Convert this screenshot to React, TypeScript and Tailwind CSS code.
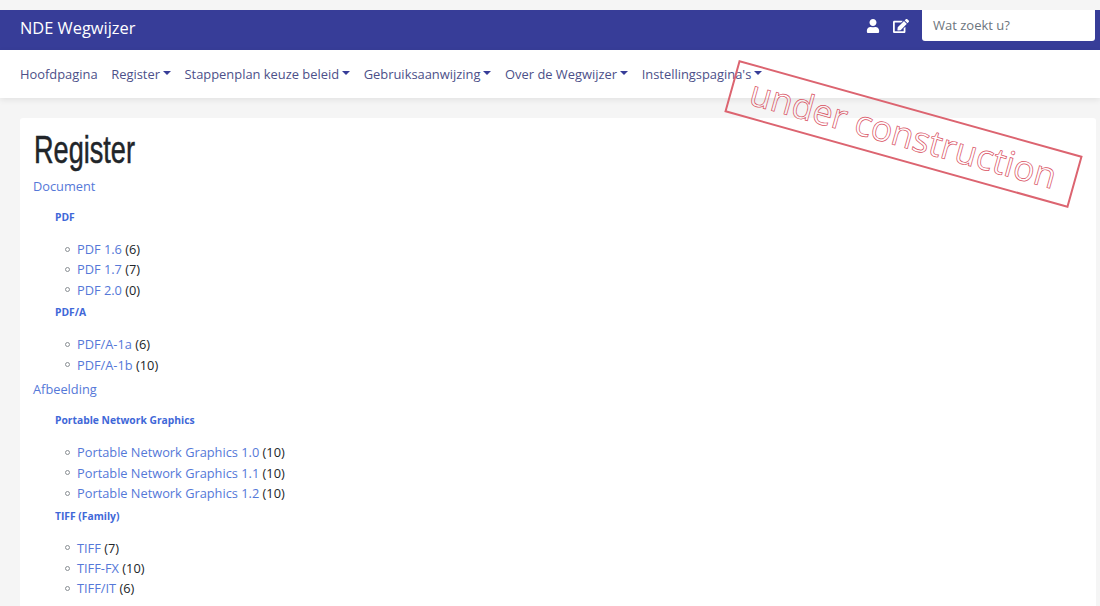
import React from "react";
import { FaUser, FaEdit } from "react-icons/fa";

const nav = [
  { label: "Hoofdpagina", caret: false },
  { label: "Register", caret: true },
  { label: "Stappenplan keuze beleid", caret: true },
  { label: "Gebruiksaanwijzing", caret: true },
  { label: "Over de Wegwijzer", caret: true },
  { label: "Instellingspagina's", caret: true },
];

const register = [
  {
    title: "Document",
    groups: [
      {
        title: "PDF",
        items: [["PDF 1.6", 6], ["PDF 1.7", 7], ["PDF 2.0", 0]],
      },
      {
        title: "PDF/A",
        items: [["PDF/A-1a", 6], ["PDF/A-1b", 10]],
      },
    ],
  },
  {
    title: "Afbeelding",
    groups: [
      {
        title: "Portable Network Graphics",
        items: [
          ["Portable Network Graphics 1.0", 10],
          ["Portable Network Graphics 1.1", 10],
          ["Portable Network Graphics 1.2", 10],
        ],
      },
      {
        title: "TIFF (Family)",
        items: [["TIFF", 7], ["TIFF-FX", 10], ["TIFF/IT", 6]],
      },
    ],
  },
];

const App = () => {
  return (
    <div className="h-[606px] overflow-hidden bg-[#f5f5f5] pt-[10px] font-['Open_Sans','Noto_Sans',sans-serif] text-[12.8px] text-[#212529] relative">
      {/* TOP BAR */}
      <header className="h-10 bg-[#373d98] flex pl-5 pr-[5px]">
        <span className="text-white text-[16.4px] leading-[36px]">NDE Wegwijzer</span>
        <div className="ml-auto flex text-white h-[31px] items-center">
          <FaUser className="text-[14px] mr-[13px]" />
          <FaEdit className="text-[16px] mr-[13px]" />
          <div className="w-[173px] h-[31px] bg-white rounded-b-[3px] pl-[11px] flex items-center text-[13px] text-[#6c757d]">
            Wat zoekt u?
          </div>
        </div>
      </header>

      {/* MENU */}
      <nav className="h-12 bg-white flex items-center pl-5 pt-[2px] gap-[13.6px] text-[12.9px] text-[#4c5089] shadow-[0_2px_6px_rgba(0,0,0,0.08)]">
        {nav.map((item) => (
          <span key={item.label} className="flex items-center whitespace-nowrap">
            {item.label}
            {item.caret && (
              <span className="ml-[3px] mb-[3px] border-x-[4.5px] border-t-[4.5px] border-x-transparent border-t-[#373d98]" />
            )}
          </span>
        ))}
      </nav>

      {/* CONTENT */}
      <main className="mt-5 ml-5 mr-1 h-[600px] bg-white rounded-[3px] pl-[13px] pt-[5px]">
        <h1 className="h-[53px] text-[39px] leading-[53px] text-[#212529] font-['Liberation_Sans',sans-serif]">
          <span className="inline-block ml-px origin-left scale-x-[0.695] [-webkit-text-stroke:0.5px_#212529]">Register</span>
        </h1>
        {register.map((section) => (
          <section key={section.title} className="mb-[4.4px]">
            <a className="block h-[20px] leading-[20px] text-[#5578d8]">{section.title}</a>
            <div className="pt-[9px]">
              {section.groups.map((group) => (
                <div key={group.title} className="pl-[22px]">
                  <h6 className="h-[34px] pt-[2px] leading-[20px] text-[10.3px] font-bold text-[#3f68d8]">
                    {group.title}
                  </h6>
                  <ul>
                    {group.items.map(([name, count]) => (
                      <li key={name} className="h-[20.4px] leading-[20.4px] flex items-center pl-[10px]">
                        <span className="w-[5px] h-[5px] mr-[7px] rounded-full border border-[#8a8f94]" />
                        <span>
                          <a className="text-[#5578d8]">{name}</a> ({count})
                        </span>
                      </li>
                    ))}
                  </ul>
                </div>
              ))}
            </div>
          </section>
        ))}
      </main>

      {/* STAMP */}
      <div className="absolute left-[725px] top-[107px] w-[357px] h-[54px] rotate-[15.6deg] border-2 border-[#dc6470] flex items-center justify-center">
        <span className="text-[35.5px] leading-none text-transparent [-webkit-text-stroke:0.7px_#d9505f] whitespace-nowrap">
          under construction
        </span>
      </div>
    </div>
  );
};

export default App;
